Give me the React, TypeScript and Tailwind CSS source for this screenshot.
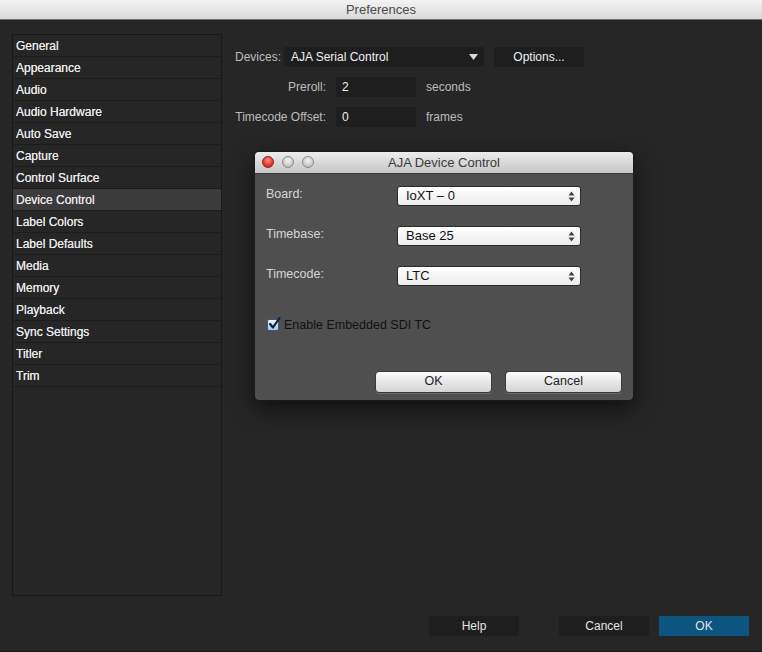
import React from "react";

const font = { fontFamily: '"Liberation Sans", Arial, sans-serif' };

const items = [
  "General",
  "Appearance",
  "Audio",
  "Audio Hardware",
  "Auto Save",
  "Capture",
  "Control Surface",
  "Device Control",
  "Label Colors",
  "Label Defaults",
  "Media",
  "Memory",
  "Playback",
  "Sync Settings",
  "Titler",
  "Trim",
];

function Stepper() {
  return (
    <svg width="7" height="11" viewBox="0 0 7 11" className="shrink-0">
      <path d="M3.5 0.5 L6.5 4.5 L0.5 4.5 Z" fill="#444" />
      <path d="M3.5 10.5 L6.5 6.5 L0.5 6.5 Z" fill="#444" />
    </svg>
  );
}

function MacSelect({ value }: { value: string }) {
  return (
    <div className="w-[184px] h-[20px] rounded-[3px] border border-[#2b2b2b] bg-gradient-to-b from-[#ffffff] to-[#ececec] flex items-center justify-between pl-[8px] pr-[5px] text-[13px] text-[#111]">
      <span>{value}</span>
      <Stepper />
    </div>
  );
}

function Traffic({ color }: { color: "red" | "gray" }) {
  return (
    <div
      className={
        color === "red"
          ? "w-[12px] h-[12px] rounded-full border border-[#9a2020] bg-[radial-gradient(circle_at_50%_35%,#ff9a90_0%,#e8392e_55%,#b01e16_100%)]"
          : "w-[12px] h-[12px] rounded-full border border-[#8c8c8c] bg-[radial-gradient(circle_at_50%_35%,#f4f4f4_0%,#cfcfcf_55%,#a8a8a8_100%)]"
      }
    />
  );
}

function MacButton({ label }: { label: string }) {
  return (
    <div className="w-[117px] h-[22px] rounded-[4px] border border-[#3a3a3a] bg-gradient-to-b from-[#fbfbfb] to-[#d4d4d4] flex items-center justify-center text-[12.5px] text-[#222] shadow-[0_1px_0_#6a6a6a]">
      {label}
    </div>
  );
}

export default function App() {
  return (
    <div
      className="relative w-[762px] h-[652px] bg-[#262626] flex flex-col overflow-hidden"
      style={font}
    >
      {/* window title bar */}
      <div className="h-[20px] shrink-0 bg-gradient-to-b from-[#f3f3f3] to-[#d9d9d9] border-b border-[#707070] flex items-center justify-center text-[13px] text-[#4a4a4a]">
        Preferences
      </div>

      {/* main */}
      <div className="flex pl-[12px] pt-[14px]">
        {/* sidebar */}
        <div className="w-[210px] h-[562px] border border-[#181818] bg-[#262626] flex flex-col">
          {items.map((it) => (
            <div
              key={it}
              className={
                "h-[22px] shrink-0 border-b border-[#1c1c1c] flex items-center pl-[3px] text-[12px] text-[#e8e8e8] [text-shadow:0_0_0.4px_#e8e8e8] " +
                (it === "Device Control" ? "bg-[#3b3b3b]" : "")
              }
            >
              {it}
            </div>
          ))}
        </div>

        {/* content */}
        <div className="pl-[12px] pt-[13px] flex flex-col gap-[10px] text-[12px]">
          <div className="flex items-center h-[20px]">
            <span className="w-[50px] text-[#bdbdbd] pl-[1px]">Devices:</span>
            <div className="w-[200px] h-[20px] bg-[#1e1e1e] flex items-center justify-between pl-[7px] pr-[6px] text-[#f0f0f0]">
              <span>AJA Serial Control</span>
              <svg width="9" height="6" viewBox="0 0 9 6">
                <path d="M0 0 L9 0 L4.5 6 Z" fill="#d8d8d8" />
              </svg>
            </div>
            <div className="ml-[10px] w-[90px] h-[20px] bg-[#1e1e1e] flex items-center justify-center text-[#f0f0f0]">
              Options...
            </div>
          </div>
          <div className="flex items-center h-[20px]">
            <span className="w-[92px] text-right text-[#bdbdbd]">Preroll:</span>
            <div className="ml-[10px] w-[80px] h-[20px] bg-[#1e1e1e] flex items-center pl-[6px] text-[#f0f0f0]">
              2
            </div>
            <span className="ml-[10px] text-[#bdbdbd]">seconds</span>
          </div>
          <div className="flex items-center h-[20px]">
            <span className="w-[92px] text-right text-[#bdbdbd]">Timecode Offset:</span>
            <div className="ml-[10px] w-[80px] h-[20px] bg-[#1e1e1e] flex items-center pl-[6px] text-[#f0f0f0]">
              0
            </div>
            <span className="ml-[10px] text-[#bdbdbd]">frames</span>
          </div>
        </div>
      </div>

      {/* footer buttons */}
      <div className="flex justify-end pr-[13px] mt-[20px] text-[12px] text-[#e4e4e4]">
        <div className="w-[90px] h-[20px] bg-[#1e1e1e] flex items-center justify-center">Help</div>
        <div className="ml-[40px] w-[90px] h-[20px] bg-[#1e1e1e] flex items-center justify-center">Cancel</div>
        <div className="ml-[10px] w-[90px] h-[20px] bg-[#0b5580] flex items-center justify-center">OK</div>
      </div>
      <div className="absolute left-0 right-0 bottom-0 h-[1px] bg-[#151515]" />

      {/* floating dialog */}
      <div className="absolute left-[254px] top-[151px] w-[380px] h-[250px] rounded-[5px] overflow-hidden bg-[#4f4f4f] shadow-[0_8px_24px_rgba(0,0,0,0.6)] border border-[#1a1a1a] flex flex-col">
        <div className="relative h-[22px] shrink-0 bg-gradient-to-b from-[#ececec] to-[#c6c6c6] border-b border-[#3a3a3a] flex items-center justify-center text-[13px] text-[#3a3a3a]">
          <div className="absolute left-[7px] top-[4px] flex gap-[8px]">
            <Traffic color="red" />
            <Traffic color="gray" />
            <Traffic color="gray" />
          </div>
          AJA Device Control
        </div>
        <div className="flex flex-col pl-[11px] pt-[12px] text-[12.5px]">
          <div className="flex items-center h-[20px]">
            <span className="w-[131px] text-[#d6d6d6] -mt-[3px]">Board:</span>
            <MacSelect value="IoXT – 0" />
          </div>
          <div className="flex items-center h-[20px] mt-[20px]">
            <span className="w-[131px] text-[#d6d6d6] -mt-[3px]">Timebase:</span>
            <MacSelect value="Base 25" />
          </div>
          <div className="flex items-center h-[20px] mt-[20px]">
            <span className="w-[131px] text-[#d6d6d6] -mt-[3px]">Timecode:</span>
            <MacSelect value="LTC" />
          </div>
          <div className="flex items-center mt-[30px] ml-[1px]">
            <div className="w-[12px] h-[12px] rounded-[2px] border border-[#3c5a86] bg-gradient-to-b from-[#eef4fc] to-[#a9c4ea] relative">
              <svg width="13" height="13" viewBox="0 0 13 13" className="absolute -left-[0px] -top-[3px]">
                <path d="M2 7 L5 10.5 L11.5 1" stroke="#0f1e36" strokeWidth="2.2" fill="none" strokeLinecap="round" strokeLinejoin="round" />
              </svg>
            </div>
            <span className="ml-[5px] text-[#121212]">Enable Embedded SDI TC</span>
          </div>
          <div className="flex mt-[36px] ml-[109px] gap-[13px]">
            <MacButton label="OK" />
            <MacButton label="Cancel" />
          </div>
        </div>
      </div>
    </div>
  );
}
